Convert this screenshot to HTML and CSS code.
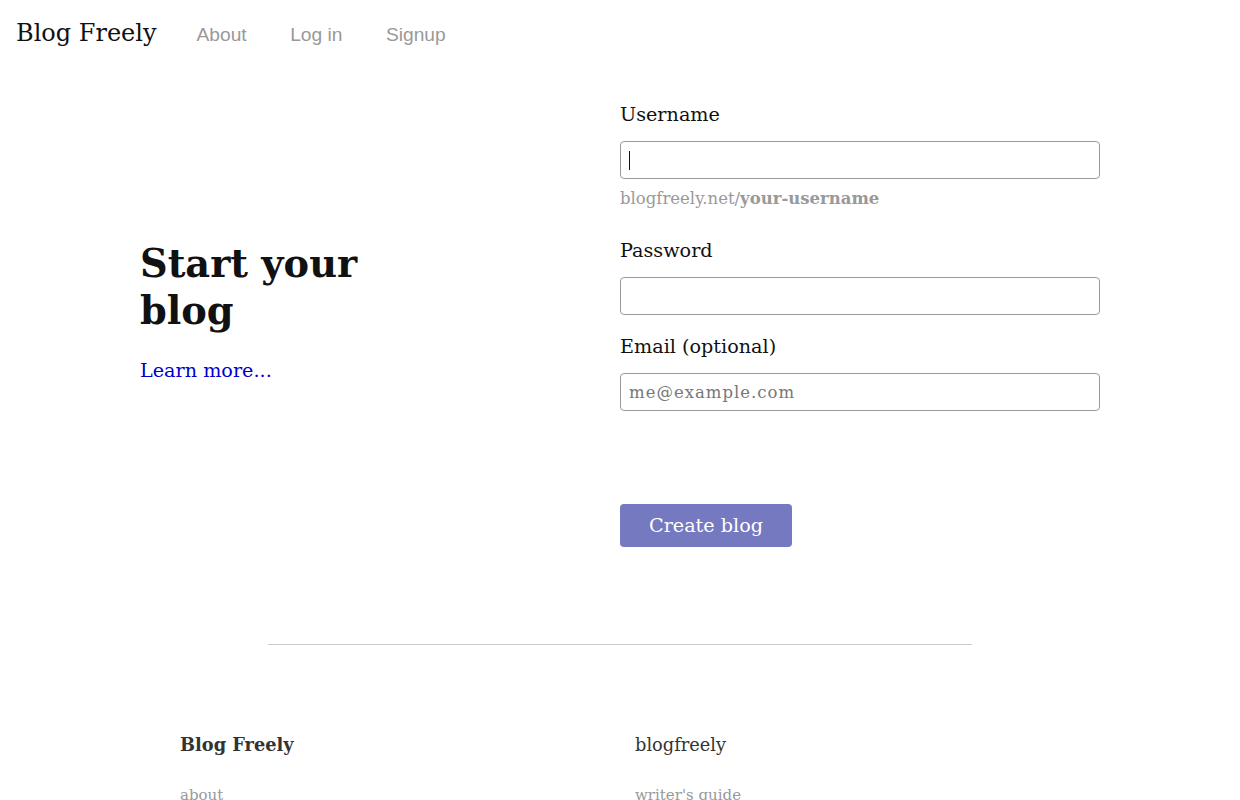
FILE: index.html
```html
<!DOCTYPE html>
<html lang="en">
<head>
<meta charset="utf-8">
<title>Blog Freely</title>
<link rel="stylesheet" href="styles.css">
</head>
<body>
<header class="site-header">
  <a class="brand" href="#">Blog Freely</a>
  <nav class="nav">
    <a href="#">About</a>
    <a href="#">Log in</a>
    <a href="#">Signup</a>
  </nav>
</header>

<main class="signup">
  <section class="intro">
    <h1>Start your blog</h1>
    <a class="learn" href="#">Learn more...</a>
  </section>
  <form class="form">
    <label class="label" for="username">Username</label>
    <div class="caret-wrap">
      <input class="field focused" id="username" type="text">
    </div>
    <p class="hint">blogfreely.net/<strong>your-username</strong></p>
    <label class="label" for="password">Password</label>
    <input class="field" id="password" type="password">
    <label class="label" for="email">Email (optional)</label>
    <input class="field" id="email" type="email" placeholder="me@example.com">
    <button class="btn" type="button">Create blog</button>
  </form>
</main>

<hr class="rule">

<footer class="footer">
  <div class="fcol">
    <h3 class="ftitle bold">Blog Freely</h3>
    <a class="flink" href="#">about</a>
  </div>
  <div class="fcol">
    <h3 class="ftitle">blogfreely</h3>
    <a class="flink" href="#">writer's guide</a>
  </div>
</footer>
</body>
</html>
```

FILE: styles.css
```css
* { box-sizing: border-box; }
html, body { margin: 0; padding: 0; background: #fff; }
body {
  font-family: "DejaVu Serif", serif;
  color: #111;
}
a { text-decoration: none; }

.site-header {
  display: flex;
  align-items: baseline;
  padding: 17px 16px 0;
  height: 66px;
}
.brand {
  font-family: "DejaVu Serif", serif;
  font-size: 24px;
  color: #111;
  line-height: 32px;
}
.nav { display: flex; gap: 43.5px; margin-left: 40px; }
.nav a {
  font-family: "Liberation Sans", Arial, sans-serif;
  font-size: 19.2px;
  color: #999;
}

.signup {
  display: grid;
  grid-template-columns: 480px 480px;
  width: 960px;
  margin: 37px auto 0;
}
.intro {
  align-self: start;
  padding-top: 137px;
}
.intro h1 {
  font-size: 38.3px;
  line-height: 47px;
  font-weight: bold;
  margin: 0;
  width: 260px;
  color: #111;
}
.learn {
  display: inline-block;
  margin-top: 25px;
  font-size: 19.2px;
  color: #0000cc;
}

.form { display: flex; flex-direction: column; align-items: flex-start; }
.label {
  font-size: 19.2px;
  line-height: 24px;
  color: #111;
  margin-bottom: 14px;
}
.caret-wrap { position: relative; }
.caret-wrap::after {
  content: "";
  position: absolute;
  left: 9px;
  top: 10px;
  width: 1px;
  height: 19px;
  background: #111;
}
.field {
  width: 480px;
  height: 38px;
  border: 1px solid #999;
  border-radius: 4px;
  padding: 0 8px;
  font-family: "DejaVu Serif", serif;
  font-size: 16.5px;
  letter-spacing: 1px;
  color: #111;
  outline: none;
  margin-bottom: 20px;
}
.field.focused { margin-bottom: 7px; }
.field::placeholder { color: #777; }
.hint {
  margin: 0 0 27px;
  font-size: 16.5px;
  line-height: 26px;
  color: #999;
}
.hint strong { font-weight: bold; }

.btn {
  margin-top: 73px;
  width: 172px;
  height: 43px;
  border: 0;
  border-radius: 4px;
  background: #7479c0;
  color: #fff;
  font-family: "DejaVu Serif", serif;
  font-size: 19.2px;
  cursor: pointer;
}

.rule {
  width: 704px;
  margin: 97px auto 0;
  border: 0;
  border-top: 1px solid #ccc;
}

.footer {
  display: grid;
  grid-template-columns: 455px 425px;
  width: 880px;
  margin: 88px auto 0;
}
.ftitle {
  margin: 0;
  font-size: 17.8px;
  line-height: 24px;
  font-weight: normal;
  color: #333;
}
.ftitle.bold { font-weight: bold; }
.flink {
  display: inline-block;
  margin-top: 29px;
  font-size: 15px;
  color: #999;
}
```
